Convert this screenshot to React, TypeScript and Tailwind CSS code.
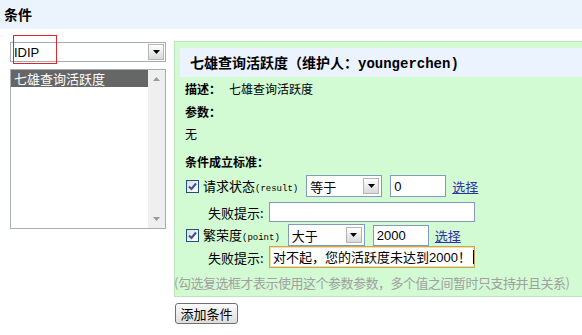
import React from "react";

const cjk = "font-['SimSun','Noto_Sans_CJK_SC',sans-serif]";
const sans = "font-['Liberation_Sans','Noto_Sans_CJK_SC',sans-serif]";
const mono = "font-['Liberation_Mono',monospace]";

function Arrow() {
  return (
    <div className="w-[16px] h-[16px] border border-[#b5b5b5] bg-gradient-to-b from-white to-[#d9d9d9] flex items-center justify-center shrink-0">
      <svg width="7" height="4" viewBox="0 0 7 4">
        <path d="M0 0 L7 0 L3.5 4 Z" fill="#000" />
      </svg>
    </div>
  );
}

function Select({ text, w, latin }: { text: string; w: string; latin?: boolean }) {
  return (
    <div className={`${w} h-[22px] border border-[#7f9db9] bg-white flex items-center justify-between pl-[3px] pr-[2px] shrink-0`}>
      <span className={`${latin ? sans : cjk} text-[13px] text-black leading-none`}>{text}</span>
      <Arrow />
    </div>
  );
}

function Check() {
  return (
    <div className="w-[13px] h-[13px] border border-[#1c5180] bg-gradient-to-br from-[#dcdcd7] to-white flex items-center justify-center shrink-0">
      <svg width="9" height="9" viewBox="0 0 9 9">
        <path d="M1 4.5 L3.5 7 L8 1.5" stroke="#3b4ea3" strokeWidth="2" fill="none" />
      </svg>
    </div>
  );
}

export default function App() {
  return (
    <div className={`w-[582px] h-[335px] bg-white overflow-hidden relative ${cjk} text-[12px] text-black`}>
      <div className="h-[29px] bg-[#ebf3fd] flex items-center pl-[4px]">
        <span className="text-[14px] font-bold">条件</span>
      </div>
      <div className="flex pl-[10px] pt-[12px]">
        {/* left column */}
        <div className="w-[156px] shrink-0 relative">
          <div className="mt-[1px] h-[20px] border border-[#a5acb2] bg-white flex items-center justify-between pl-[3px] pr-[1px]">
            <span className={`${sans} text-[13px] leading-none`}>IDIP</span>
            <Arrow />
          </div>
          <div className="absolute left-[3px] top-[-6px] w-[44px] h-[29px] border border-[#e0262a]" />
          <div className="mt-[7px] h-[160px] border border-[#a5acb2] bg-white flex">
            <div className="flex-1">
              <div className="h-[17px] bg-[#666666] text-white text-[13px] flex items-center pl-[3px] leading-none">七雄查询活跃度</div>
            </div>
            <div className="w-[17px] bg-[#efefef] flex flex-col justify-between items-center py-[7px]">
              <svg width="7" height="4" viewBox="0 0 7 4"><path d="M0 4 L7 4 L3.5 0 Z" fill="#9a9a9a" /></svg>
              <svg width="7" height="4" viewBox="0 0 7 4"><path d="M0 0 L7 0 L3.5 4 Z" fill="#9a9a9a" /></svg>
            </div>
          </div>
        </div>
        {/* right column */}
        <div className="ml-[8px] flex flex-col">
          <div className="w-[412px] border border-[#bde5bd] bg-[#d3fbd3] pt-[6px] pl-[5px] pb-[5px]">
            <div className="h-[29px] bg-[#eaf3fe] flex items-center pl-[10px]">
              <span className="text-[14px] font-bold leading-none whitespace-nowrap">
                七雄查询活跃度（维护人：<span className={`${mono} text-[14px]`}>youngerchen)</span>
              </span>
            </div>
            <div className="pl-[5px]">
              <div className="mt-[4px] h-[16px] flex items-center">
                <span className="font-bold w-[44px]">描述：</span>
                <span>七雄查询活跃度</span>
              </div>
              <div className="mt-[7px] h-[16px] flex items-center font-bold">参数：</div>
              <div className="mt-[6px] h-[16px] flex items-center">无</div>
              <div className="mt-[12px] h-[16px] flex items-center font-bold">条件成立标准：</div>
              {/* row1 */}
              <div className="mt-[5px] h-[22px] flex items-center whitespace-nowrap">
                <div className="ml-[1px]"><Check /></div>
                <span className="ml-[4px] text-[13px] leading-none">请求状态<span className={`${mono} text-[9px]`}>(result)</span></span>
                <div className="ml-[8px]"><Select text="等于" w="w-[76px]" /></div>
                <div className="ml-[8px] w-[56px] h-[22px] border border-[#7f9db9] bg-white flex items-center pl-[3px]">
                  <span className={`${sans} text-[13px] leading-none`}>0</span>
                </div>
                <span className="ml-[6px] text-[13px] text-[#2f2fa8] underline leading-none">选择</span>
              </div>
              {/* row2 */}
              <div className="mt-[5px] h-[20px] flex items-center whitespace-nowrap">
                <span className="ml-[23px] text-[13px] leading-none w-[61px]">失败提示:</span>
                <div className="w-[206px] h-[20px] border border-[#7f9db9] bg-white" />
              </div>
              {/* row3 */}
              <div className="mt-[2px] h-[22px] flex items-center whitespace-nowrap">
                <div className="ml-[1px]"><Check /></div>
                <span className="ml-[4px] text-[13px] leading-none">繁荣度<span className={`${mono} text-[9px]`}>(point)</span></span>
                <div className="ml-[8px]"><Select text="大于" w="w-[77px]" /></div>
                <div className="ml-[8px] w-[56px] h-[21px] border border-[#7f9db9] bg-white flex items-center pl-[3px]">
                  <span className={`${sans} text-[13px] leading-none`}>2000</span>
                </div>
                <span className="ml-[6px] text-[13px] text-[#2f2fa8] underline leading-none">选择</span>
              </div>
              {/* row4 */}
              <div className="h-[22px] flex items-center whitespace-nowrap">
                <span className="ml-[23px] text-[13px] leading-none w-[61px]">失败提示:</span>
                <div className="w-[206px] h-[22px] border border-[#c9a655] shadow-[inset_0_0_0_1px_#f3dfa6] bg-white flex items-center pl-[3px]">
                  <span className="text-[13px] leading-none">对不起，您的活跃度未达到<span className={sans}>2000</span>！</span>
                  <span className="ml-[2px] w-[1px] h-[14px] bg-black" />
                </div>
              </div>
            </div>
            <div className="mt-[7px] -ml-[6px] h-[16px] flex items-center text-[13px] tracking-[-0.5px] text-[#a0a0a0] whitespace-nowrap">(勾选复选框才表示使用这个参数参数，多个值之间暂时只支持并且关系)</div>
          </div>
          <div className="mt-[6px] ml-[1px] w-[63px] h-[21px] rounded-[3px] border border-[#707070] bg-gradient-to-b from-[#fbfbfb] to-[#dedede] flex items-center justify-center">
            <span className="text-[13px] leading-none">添加条件</span>
          </div>
        </div>
      </div>
    </div>
  );
}
